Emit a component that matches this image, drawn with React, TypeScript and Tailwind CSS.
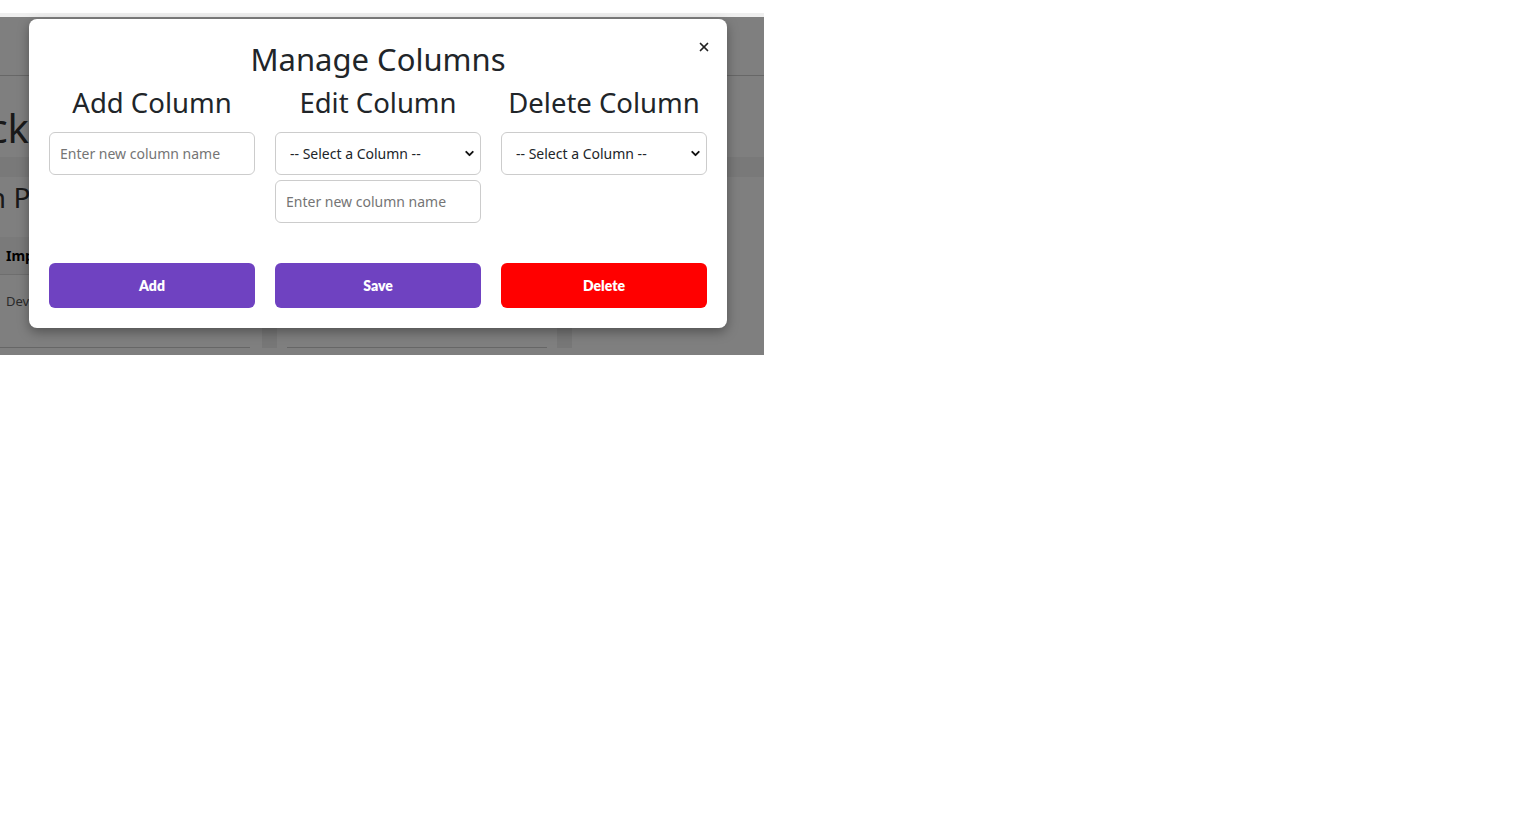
import { ChevronDown, X } from "lucide-react";

const font = { fontFamily: '"Noto Sans", "Open Sans", sans-serif' };

function ColumnSelect() {
  return (
    <div className="relative">
      <select className="h-[43px] w-full appearance-none rounded-[6px] border border-[#cccccc] bg-white pl-[14px] pr-8 text-[14px] text-[#212529] outline-none">
        <option>-- Select a Column --</option>
      </select>
      <ChevronDown className="pointer-events-none absolute right-[5px] top-[15px] h-[13px] w-[13px] text-[#111]" strokeWidth={3.5} />
    </div>
  );
}

function NameInput() {
  return (
    <input
      type="text"
      placeholder="Enter new column name"
      className="h-[43px] w-full rounded-[6px] border border-[#cccccc] bg-white px-[10px] text-[14px] text-[#212529] outline-none placeholder:text-[#757575]"
    />
  );
}

export default function App() {
  return (
    <div className="min-h-screen bg-white" style={font}>
      <div className="relative h-[355px] w-[764px] overflow-hidden bg-white">
        {/* page under the overlay */}
        <div className="h-[13px] bg-white" />
        <div className="h-[4px] bg-[#efefef]" />
        <div className="h-[59px] border-b border-[#cfcfcf] bg-white" />
        <div className="flex h-[81px] items-center bg-white pt-[22px]">
          <span className="ml-[-70px] text-[40px] text-[#333]">Track</span>
        </div>
        <div className="h-[20px] bg-[#f2f2f2]" />
        <div className="flex h-[60px] items-start bg-white">
          <span className="ml-[-33px] text-[28px] leading-[40px] text-[#333]">On Progress</span>
        </div>
        <div className="flex bg-[#eeeeee]">
          <div className="w-[262px] bg-white">
            <div className="flex h-[38px] items-center border-b border-[#dddddd] bg-[#f5f5f5] pl-[6px] text-[14px] font-bold text-black">
              Impact
            </div>
            <div className="flex h-[54px] items-center pl-[6px] text-[13px] text-[#555]">Dev</div>
            <div className="mt-[18px] w-[250px] border-t border-[#cccccc]" />
          </div>
          <div className="w-[15px]" />
          <div className="w-[280px] bg-white">
            <div className="h-[38px] border-b border-[#dddddd] bg-[#f5f5f5]" />
            <div className="h-[54px]" />
            <div className="ml-[10px] mt-[18px] w-[260px] border-t border-[#cccccc]" />
          </div>
          <div className="w-[15px]" />
          <div className="flex-1 bg-white" />
        </div>

        {/* overlay */}
        <div className="absolute left-0 right-0 top-[17px] bottom-0 bg-black/50" />

        {/* modal */}
        <div className="absolute left-[29px] top-[19px] w-[698px] rounded-[8px] bg-white px-[20px] pb-[20px] pt-[20px] shadow-[0_4px_12px_rgba(0,0,0,0.35)]">
          <button className="absolute right-[16px] top-[21px] text-[#222]">
            <X className="h-[14px] w-[14px]" strokeWidth={3} />
          </button>
          <h2 className="text-center text-[31px] leading-[40px] text-[#212529]">Manage Columns</h2>
          <div className="mt-[5px] grid grid-cols-3 gap-x-[20px]">
            <div className="flex flex-col">
              <h3 className="mb-[10px] text-center text-[27.5px] leading-[38px] text-[#212529]">Add Column</h3>
              <NameInput />
            </div>
            <div className="flex flex-col">
              <h3 className="mb-[10px] text-center text-[27.5px] leading-[38px] text-[#212529]">Edit Column</h3>
              <div className="flex flex-col gap-[5px]">
                <ColumnSelect />
                <NameInput />
              </div>
            </div>
            <div className="flex flex-col">
              <h3 className="mb-[10px] text-center text-[27.5px] leading-[38px] text-[#212529]">Delete Column</h3>
              <ColumnSelect />
            </div>
          </div>
          <div className="mt-[40px] grid grid-cols-3 gap-x-[20px]">
            <button className="h-[45px] rounded-[6px] bg-[#6f42c1] text-[14px] font-extrabold text-white" style={{ fontFamily: '"Lato", sans-serif' }}>
              Add
            </button>
            <button className="h-[45px] rounded-[6px] bg-[#6f42c1] text-[14px] font-extrabold text-white" style={{ fontFamily: '"Lato", sans-serif' }}>
              Save
            </button>
            <button className="h-[45px] rounded-[6px] bg-[#ff0000] text-[14px] font-extrabold text-white" style={{ fontFamily: '"Lato", sans-serif' }}>
              Delete
            </button>
          </div>
        </div>
      </div>
    </div>
  );
}
